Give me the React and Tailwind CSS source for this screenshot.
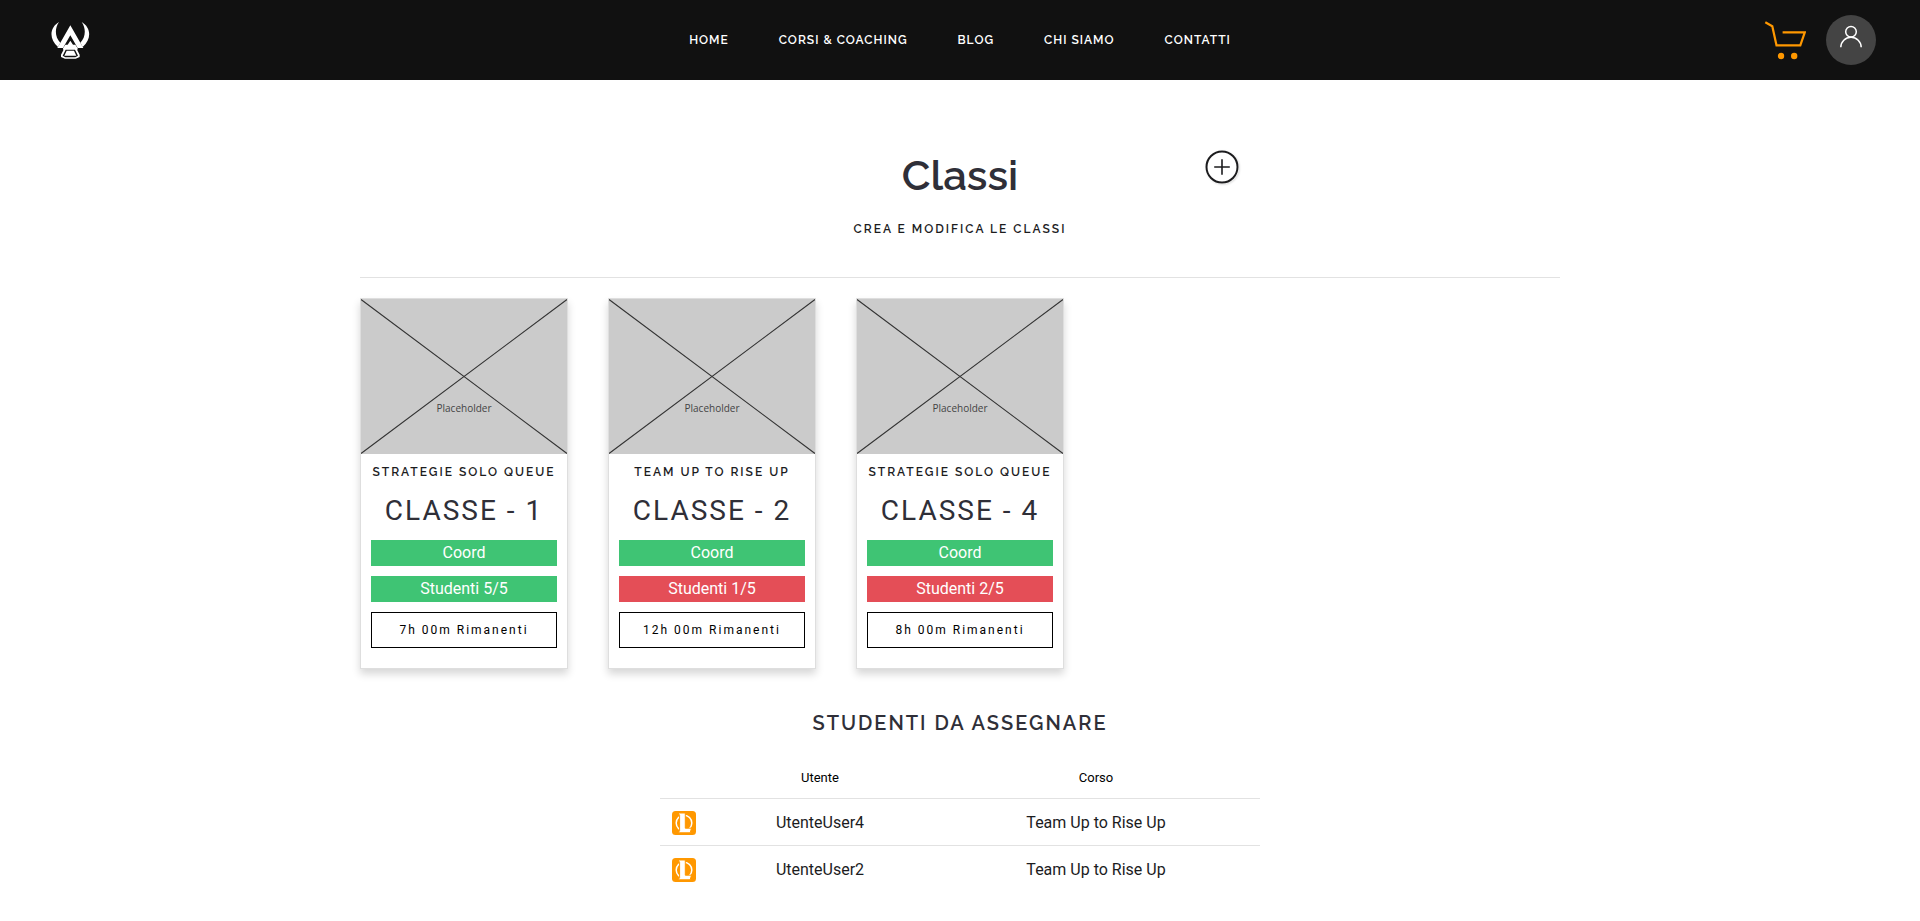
import React from "react";

const navItems = ["Home", "Corsi & Coaching", "Blog", "Chi siamo", "Contatti"];

const classes = [
  { course: "Strategie Solo Queue", name: "Classe - 1", students: 5, hours: "7h 00m" },
  { course: "Team Up to Rise Up", name: "Classe - 2", students: 1, hours: "12h 00m" },
  { course: "Strategie Solo Queue", name: "Classe - 4", students: 2, hours: "8h 00m" },
];

const pending = [
  { user: "UtenteUser4", course: "Team Up to Rise Up" },
  { user: "UtenteUser2", course: "Team Up to Rise Up" },
];

function Logo() {
  return (
    <svg viewBox="60 60 120 120" className="size-10" fill="#fff" aria-hidden="true">
      <path d="M87 66 C59 82 56 118 84 141 L91 128 C75 112 73 86 87 66Z" />
      <path d="M155 66 C183 82 186 118 158 141 L151 128 C167 112 169 86 155 66Z" />
      <path d="M121 76 L82 144 H99 L121 106 L143 144 H160Z" />
      <path d="M121 122 L113 134 L106 134 L99 145 H143 L136 134 L129 134Z" />
      <path
        fillRule="evenodd"
        d="M99 144 H143 L142 151 L149 164 V171 L137 176 H105 L93 171 V164 L100 151Z M107 149 L98 167 L106 172 H136 L144 167 L135 149Z"
      />
      <path d="M110 152 H132 L139 167 H103Z" />
    </svg>
  );
}

function CartIcon() {
  return (
    <svg viewBox="0 0 42 40" className="h-10 w-[42px]" fill="none" stroke="#ff9800" strokeWidth="2.2" aria-hidden="true">
      <path d="M1.3 2.3 L8.3 6.3 L12.5 25.3 H36.3 L40.8 12.3 H18.6" />
      <circle cx="17" cy="36" r="3.2" fill="#ff9800" stroke="none" />
      <circle cx="30.2" cy="36" r="3.2" fill="#ff9800" stroke="none" />
    </svg>
  );
}

function UserIcon() {
  return (
    <svg viewBox="0 0 24 24" className="size-6" fill="none" stroke="#fff" strokeWidth="1.5" aria-hidden="true">
      <circle cx="12" cy="6.8" r="5.3" />
      <path d="M1.8 22.3 A10.2 10 0 0 1 22.2 22.3" />
    </svg>
  );
}

function PlusIcon() {
  return (
    <svg viewBox="0 0 34 34" className="size-[34px]" fill="none" stroke="#1c1c1e" strokeWidth="2" aria-hidden="true">
      <circle cx="17" cy="17" r="15.5" />
      <path strokeWidth="1.6" d="M17 9.2 V24.8 M9.2 17 H24.8" />
    </svg>
  );
}

function LeagueIcon() {
  return (
    <svg viewBox="0 0 24 24" className="mx-auto block size-6" aria-hidden="true">
      <rect width="24" height="24" rx="3.5" fill="#ff9800" />
      <circle cx="12" cy="12" r="7.8" fill="none" stroke="#fff" strokeWidth="1.5" />
      <path
        d="M6.2 2 H13.3 V17.2 H19.5 L18.2 21.8 H6.2 L7.6 19.6 V4.4Z"
        fill="#fff"
        stroke="#ff9800"
        strokeWidth="1"
      />
    </svg>
  );
}

function Placeholder() {
  return (
    <svg viewBox="0 0 206 155" className="block w-full" role="img" aria-label="Placeholder">
      <rect width="206" height="155" fill="#cbcbcb" />
      <path d="M0 0.5 L206 154.5 M206 0.5 L0 154.5" stroke="#333" strokeWidth="1.1" />
      <text x="103" y="113" textAnchor="middle" fontSize="10" fill="#444" className="font-['Open_Sans',sans-serif]">
        Placeholder
      </text>
    </svg>
  );
}

function ClassCard({ item }) {
  const full = item.students === 5;
  return (
    <article className="border border-[#dedede] bg-white shadow-[0_5px_8px_rgba(0,0,0,0.16)]">
      <Placeholder />
      <div className="flex flex-col gap-2.5 px-2.5 pt-2 pb-5 text-center">
        <p className="-mx-2.5 font-['Raleway','Lato',sans-serif] text-xs leading-5 font-semibold tracking-[2px] whitespace-nowrap text-[#1c1c1e] uppercase">
          {item.course}
        </p>
        <h2 className="text-[28px] leading-[38px] tracking-[2px] whitespace-nowrap text-[#2f2f38] uppercase">{item.name}</h2>
        <p className="bg-[#3fc474] leading-[26px] text-white">Coord</p>
        <p className={(full ? "bg-[#3fc474]" : "bg-[#e44e57]") + " leading-[26px] text-white"}>
          Studenti {item.students}/5
        </p>
        <button type="button" className="h-9 border border-black bg-white text-xs tracking-[2px] text-black">
          {item.hours} Rimanenti
        </button>
      </div>
    </article>
  );
}

export default function App() {
  return (
    <div className="bg-white font-['Roboto',sans-serif] text-[#1c1c1e]">
      <header className="grid h-20 grid-cols-[1fr_auto_1fr] items-center bg-[#111] px-11">
        <a href="#home" aria-label="Home" className="ml-1.5 justify-self-start">
          <Logo />
        </a>
        <nav className="flex gap-[50px] font-['Raleway','Lato',sans-serif] text-xs font-semibold tracking-[1px] text-white uppercase">
          {navItems.map((item) => (
            <a key={item} href="#">
              {item}
            </a>
          ))}
        </nav>
        <div className="flex items-center gap-5 justify-self-end">
          <a href="#carrello" aria-label="Carrello">
            <CartIcon />
          </a>
          <button type="button" aria-label="Profilo" className="flex size-[50px] justify-center rounded-full bg-[#444] pt-2.5">
            <UserIcon />
          </button>
        </div>
      </header>

      <main className="mx-auto max-w-[1200px]">
        <div className="border-b border-[#e2e2e2] pt-[70px] pb-9 text-center">
          <div className="mx-auto grid max-w-[600px] grid-cols-[1fr_auto_1fr] items-start">
            <h1 className="col-start-2 font-['Raleway','Lato',sans-serif] text-[42px] leading-[52px] font-semibold text-[#2f2f38]">
              Classi
            </h1>
            <button type="button" aria-label="Aggiungi classe" className="mr-[21px] justify-self-end rounded-full shadow-[1px_1px_2px_rgba(0,0,0,0.12)]">
              <PlusIcon />
            </button>
          </div>
          <p className="mt-[15px] font-['Raleway','Lato',sans-serif] text-xs leading-6 font-semibold tracking-[2px] uppercase">
            Crea e modifica le classi
          </p>
        </div>

        <section className="grid grid-cols-5 gap-10 pt-5">
          {classes.map((item) => (
            <ClassCard key={item.name} item={item} />
          ))}
        </section>

        <section className="mx-auto max-w-[600px] pt-10 text-center">
          <h2 className="font-['Raleway','Lato',sans-serif] text-xl leading-7 font-semibold tracking-[2px] text-[#2f2f38] uppercase">
            Studenti da assegnare
          </h2>
          <table className="mt-[21px] w-full table-fixed">
            <colgroup>
              <col className="w-12" />
              <col className="w-56" />
              <col />
            </colgroup>
            <thead>
              <tr className="h-10 text-[13px] text-black">
                <td />
                <th scope="col" className="font-normal">Utente</th>
                <th scope="col" className="font-normal">Corso</th>
              </tr>
            </thead>
            <tbody>
              {pending.map((row) => (
                <tr key={row.user} className="h-[47px] border-t border-[#e2e2e2]">
                  <td className="pt-0.5">
                    <LeagueIcon />
                  </td>
                  <td className="pt-0.5">{row.user}</td>
                  <td className="pt-0.5">{row.course}</td>
                </tr>
              ))}
            </tbody>
          </table>
        </section>
      </main>
    </div>
  );
}
